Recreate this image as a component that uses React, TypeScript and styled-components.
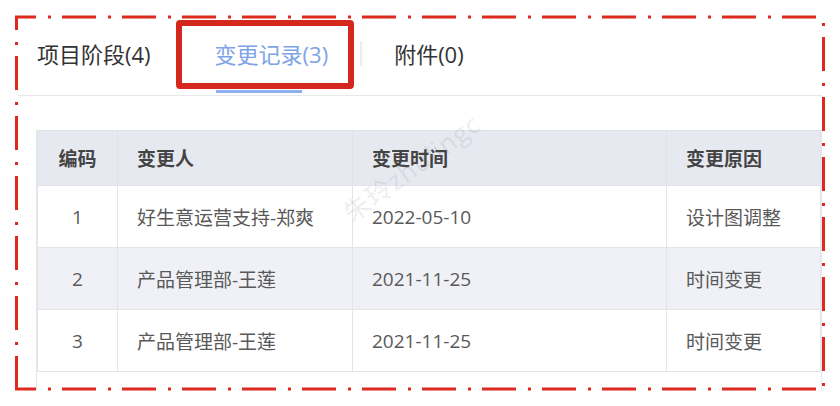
import React from 'react'
import styled, { createGlobalStyle } from 'styled-components'

const GlobalStyle = createGlobalStyle`
  html, body {
    margin: 0;
    padding: 0;
    background: #fff;
  }
  body {
    font-family: "Open Sans", "Noto Sans CJK SC", sans-serif;
  }
`

const Page = styled.div`
  position: relative;
  width: 840px;
  height: 406px;
  overflow: hidden;
  background: #fff;
`

const Panel = styled.div`
  padding: 19px 18px 0 18px;
`

const TabBar = styled.div`
  display: flex;
  align-items: center;
  height: 76px;
  padding-left: 19px;
  border-bottom: 1px solid #e8e8e8;
`

const Tab = styled.div<{ $active?: boolean; $first?: boolean }>`
  position: relative;
  display: flex;
  align-items: center;
  box-sizing: border-box;
  height: 100%;
  padding: 0 32px 8px;
  padding-left: ${(p) => (p.$first ? '0' : '32px')};
  font-size: 22px;
  color: ${(p) => (p.$active ? '#7ea3e6' : '#333')};
  white-space: nowrap;

  ${(p) =>
    p.$active &&
    `
    &::before {
      content: '';
      position: absolute;
      left: -7px;
      right: 6px;
      top: 1px;
      height: 69px;
      box-sizing: border-box;
      border: 6px solid #d5281d;
      border-radius: 4px;
    }
    &::after {
      content: '';
      position: absolute;
      left: 33px;
      width: 86px;
      bottom: 2px;
      height: 3px;
      background: #8cb0ee;
    }
  `}
`

const Divider = styled.span`
  width: 2px;
  height: 25px;
  margin-bottom: 8px;
  background: #ececec;
`

const TableWrap = styled.div`
  margin: 34px 0 0 18px;
  height: 260px;
  border-left: 1px solid #e5e7ec;
  border-right: 1px solid #e5e7ec;
  box-sizing: border-box;
`

const Table = styled.table`
  width: 100%;
  border-collapse: collapse;
  table-layout: fixed;
`

const HeadCell = styled.th<{ $center?: boolean }>`
  height: 54px;
  padding: 0 19px;
  background: #e7e9f1;
  border: 1px solid #e0e2e9;
  text-align: ${(p) => (p.$center ? 'center' : 'left')};
  font-size: 19px;
  font-weight: bold;
  color: #444;
`

const Row = styled.tr<{ $striped?: boolean }>`
  background: ${(p) => (p.$striped ? '#f0f1f6' : '#fff')};
`

const Cell = styled.td<{ $center?: boolean }>`
  height: 61px;
  padding: 0 19px;
  border: 1px solid #e3e5ea;
  text-align: ${(p) => (p.$center ? 'center' : 'left')};
  font-size: 19px;
  color: #595959;
  white-space: nowrap;
`

const Watermark = styled.span`
  position: absolute;
  left: 330px;
  top: 148px;
  transform: rotate(-36deg);
  font-size: 26px;
  color: rgba(120, 120, 120, 0.15);
  letter-spacing: 1px;
  pointer-events: none;
  white-space: nowrap;
`

const Annotation = styled.svg`
  position: absolute;
  left: 0;
  top: 0;
  pointer-events: none;
`

const records = [
  { no: 1, person: '好生意运营支持-郑爽', time: '2022-05-10', reason: '设计图调整' },
  { no: 2, person: '产品管理部-王莲', time: '2021-11-25', reason: '时间变更' },
  { no: 3, person: '产品管理部-王莲', time: '2021-11-25', reason: '时间变更' }
]

const RED = '#de2a1e'
const DASH = '34 12 3 11'

const DashFrame = () => (
  <Annotation width="840" height="406">
    <line x1="15" y1="17" x2="818" y2="17" stroke={RED} strokeWidth="3" strokeDasharray={DASH} strokeDashoffset="13" />
    <line x1="15" y1="389" x2="818" y2="389" stroke={RED} strokeWidth="3" strokeDasharray={DASH} strokeDashoffset="13" />
    <line x1="16.5" y1="16" x2="16.5" y2="390" stroke={RED} strokeWidth="3" strokeDasharray={DASH} strokeDashoffset="20" />
    <line x1="823.5" y1="16" x2="823.5" y2="390" stroke={RED} strokeWidth="3" strokeDasharray={DASH} strokeDashoffset="39" />
  </Annotation>
)

const App = () => (
  <Page>
    <GlobalStyle />
    <Panel>
      <TabBar>
        <Tab $first>项目阶段(4)</Tab>
        <Tab $active>变更记录(3)</Tab>
        <Divider />
        <Tab>附件(0)</Tab>
      </TabBar>
      <TableWrap>
        <Table>
          <colgroup>
            <col style={{ width: 80 }} />
            <col style={{ width: 235 }} />
            <col style={{ width: 314 }} />
            <col />
          </colgroup>
          <thead>
            <tr>
              <HeadCell $center>编码</HeadCell>
              <HeadCell>变更人</HeadCell>
              <HeadCell>变更时间</HeadCell>
              <HeadCell>变更原因</HeadCell>
            </tr>
          </thead>
          <tbody>
            {records.map((r, i) => (
              <Row key={r.no} $striped={i % 2 === 1}>
                <Cell $center>{r.no}</Cell>
                <Cell>{r.person}</Cell>
                <Cell>{r.time}</Cell>
                <Cell>{r.reason}</Cell>
              </Row>
            ))}
          </tbody>
        </Table>
      </TableWrap>
    </Panel>
    <Watermark>朱玲zhulingc</Watermark>
    <DashFrame />
  </Page>
)

export default App
